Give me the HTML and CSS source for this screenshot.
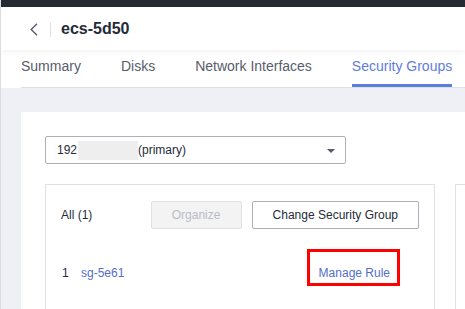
FILE: index.html
```html
<!DOCTYPE html>
<html lang="en">
<head>
  <meta charset="UTF-8" />
  <title>ecs-5d50</title>
  <link rel="stylesheet" href="styles.css">
</head>
<body>
  <div class="topbar"></div>

  <div class="header">
    <a class="back" href="#">
      <svg width="8" height="13" viewBox="0 0 8 13"><path d="M7 0.7 L1.2 6.5 L7 12.3" fill="none" stroke="#575d6c" stroke-width="1.4"/></svg>
    </a>
    <span class="divider"></span>
    <h1>ecs-5d50</h1>
  </div>

  <div class="tabs">
    <ul>
      <li>Summary</li>
      <li>Disks</li>
      <li>Network Interfaces</li>
      <li class="active">Security Groups</li>
    </ul>
  </div>

  <div class="content">
    <div class="panel">
      <div class="select">
        <span>192</span><span class="masked"></span><span>(primary)</span>
        <i class="caret"></i>
      </div>

      <div class="cards">
        <div class="card">
          <div class="toolbar">
            <span class="count">All (1)</span>
            <div class="actions">
              <button class="btn disabled">Organize</button>
              <button class="btn">Change Security Group</button>
            </div>
          </div>
          <div class="row">
            <span class="idx">1</span>
            <a class="link" href="#">sg-5e61</a>
            <a class="link manage" href="#">Manage Rule<span class="mark"></span></a>
          </div>
        </div>
        <div class="card"></div>
      </div>
    </div>
  </div>
</body>
</html>
```

FILE: styles.css
```css
html {
  overflow: hidden;
}

body {
  margin: 0;
  font-family: 'Liberation Sans', Arial, sans-serif;
  background-color: #eef0f5;
  border-left: 1px solid #dcdde3;
}

.topbar {
  height: 7px;
  background-color: #262a33;
}

.header {
  height: 43px;
  background-color: #fff;
  display: flex;
  align-items: center;
  padding-left: 29px;
  position: relative;
  z-index: 1;
  box-shadow: 0 2px 5px rgba(0, 0, 0, 0.05);
}

.back {
  display: flex;
  width: 8px;
  margin-top: 1px;
}

.divider {
  width: 1px;
  height: 15px;
  background-color: #dfe1e6;
  margin: 1px 10px 0 12px;
}

h1 {
  margin: 0;
  font-size: 16px;
  font-weight: bold;
  color: #252b3a;
}

.tabs {
  background-color: #fff;
  padding: 0 0 0 20px;
}

.tabs ul {
  list-style: none;
  margin: 0;
  padding: 0;
  display: flex;
  gap: 40px;
  border-bottom: 1px solid #dfe1e6;
}

.tabs li {
  font-size: 14px;
  line-height: 20px;
  color: #575d6c;
  padding: 6px 0 8px;
  border-bottom: 3px solid transparent;
  white-space: nowrap;
}

.tabs li.active {
  color: #5e7ce0;
  border-bottom-color: #5e7ce0;
}

.content {
  padding: 24px 0 0 20px;
}

.panel {
  background-color: #fff;
  padding: 24px 0 0 24px;
  height: 173px;
  overflow: hidden;
}

.select {
  width: 288px;
  height: 26px;
  border: 1px solid #adb0b8;
  border-radius: 2px;
  display: flex;
  align-items: center;
  padding-left: 11px;
  font-size: 12px;
  color: #252b3a;
  position: relative;
}

.masked {
  display: inline-block;
  width: 60px;
  height: 19px;
  background-color: #eeeeee;
  margin: 0 0 0 1px;
}

.caret {
  position: absolute;
  right: 10px;
  top: 12px;
  border-left: 4px solid transparent;
  border-right: 4px solid transparent;
  border-top: 4px solid #575d6c;
}

.cards {
  display: flex;
  gap: 20px;
  margin-top: 20px;
}

.card {
  flex: none;
  width: 390px;
  height: 125px;
  border: 1px solid #dfe1e6;
  border-bottom: none;
  padding: 16px 15px 0 15px;
  box-sizing: border-box;
}

.toolbar {
  display: flex;
  align-items: center;
  justify-content: space-between;
}

.count {
  font-size: 12px;
  color: #252b3a;
}

.actions {
  display: flex;
  gap: 10px;
}

.btn {
  height: 28px;
  padding: 0 20px;
  font-family: inherit;
  font-size: 12px;
  color: #252b3a;
  background-color: #fff;
  border: 1px solid #adb0b8;
  border-radius: 2px;
}

.btn.disabled {
  width: 91px;
  color: #b8bcc6;
  background-color: #f3f3f3;
  border-color: #dfe1e6;
}

.row {
  display: flex;
  align-items: center;
  margin-top: 35px;
  padding: 0 29px 0 1px;
  font-size: 12px;
  line-height: 18px;
}

.idx {
  color: #252b3a;
  width: 19px;
}

.link {
  color: #526ecc;
  text-decoration: none;
}

.manage {
  margin-left: auto;
  position: relative;
}

.mark {
  position: absolute;
  left: -12px;
  top: -15px;
  width: 87px;
  height: 31px;
  border: 3px solid #ff0000;
}
```
